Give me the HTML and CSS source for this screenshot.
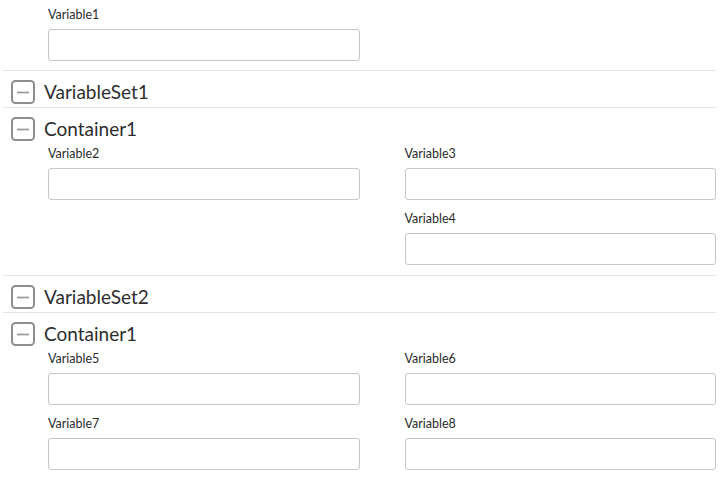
FILE: index.html
```html
<!DOCTYPE html>
<html lang="en">
<head>
    <meta charset="UTF-8">
    <title>Variables</title>
    <link rel="stylesheet" href="styles.css">
</head>
<body>

    <div class="form">

        <div class="fields top">
            <div class="field">
                <label>Variable1</label>
                <input type="text">
            </div>
        </div>

        <div class="set">
            <div class="heading">
                <span class="toggle"><svg width="24" height="24" viewBox="0 0 24 24"><rect x="1" y="1" width="22" height="22" rx="3.5"/><line x1="6" y1="12.5" x2="18" y2="12.5"/></svg></span>
                VariableSet1
            </div>
            <div class="heading container">
                <span class="toggle"><svg width="24" height="24" viewBox="0 0 24 24"><rect x="1" y="1" width="22" height="22" rx="3.5"/><line x1="6" y1="12.5" x2="18" y2="12.5"/></svg></span>
                Container1
            </div>
            <div class="fields">
                <div class="column">
                    <div class="field">
                        <label>Variable2</label>
                        <input type="text">
                    </div>
                </div>
                <div class="column">
                    <div class="field">
                        <label>Variable3</label>
                        <input type="text">
                    </div>
                    <div class="field">
                        <label>Variable4</label>
                        <input type="text">
                    </div>
                </div>
            </div>
        </div>

        <div class="set">
            <div class="heading">
                <span class="toggle"><svg width="24" height="24" viewBox="0 0 24 24"><rect x="1" y="1" width="22" height="22" rx="3.5"/><line x1="6" y1="12.5" x2="18" y2="12.5"/></svg></span>
                VariableSet2
            </div>
            <div class="heading container">
                <span class="toggle"><svg width="24" height="24" viewBox="0 0 24 24"><rect x="1" y="1" width="22" height="22" rx="3.5"/><line x1="6" y1="12.5" x2="18" y2="12.5"/></svg></span>
                Container1
            </div>
            <div class="fields">
                <div class="column">
                    <div class="field">
                        <label>Variable5</label>
                        <input type="text">
                    </div>
                    <div class="field">
                        <label>Variable7</label>
                        <input type="text">
                    </div>
                </div>
                <div class="column">
                    <div class="field">
                        <label>Variable6</label>
                        <input type="text">
                    </div>
                    <div class="field">
                        <label>Variable8</label>
                        <input type="text">
                    </div>
                </div>
            </div>
        </div>

    </div>

</body>
</html>
```

FILE: styles.css
```css
body {
    margin: 0;
    background-color: #fff;
    color: #333;
    font-family: 'Lato', 'Liberation Sans', sans-serif;
}

.form {
    margin-left: 3px;
    width: 713px;
}

.fields {
    display: grid;
    grid-template-columns: 1fr 1fr;
    padding: 5px 0 10px;
}

.fields.top {
    padding: 7px 0 9px;
}

.column {
    display: flex;
    flex-direction: column;
    gap: 11px;
}

.field {
    padding-left: 45px;
    display: flex;
    flex-direction: column;
}

    .field label {
        font-size: 12.5px;
        line-height: 16px;
        margin-bottom: 6px;
        color: #2b2b2b;
    }

    .field input {
        box-sizing: border-box;
        width: 100%;
        height: 32px;
        margin: 0;
        border: 1px solid #c6c6c6;
        border-radius: 3px;
        background: #fff;
        font-family: inherit;
        font-size: 14px;
        padding: 0 8px;
    }

.set {
    border-top: 1px solid #e4e4e4;
}

.heading {
    display: flex;
    align-items: center;
    gap: 9px;
    padding: 9px 0 3px 8px;
    font-size: 19px;
    line-height: 24px;
    color: #2e2e2e;
}

    .heading.container {
        border-top: 1px solid #e4e4e4;
        padding-bottom: 0;
    }

.toggle {
    display: flex;
    width: 24px;
    height: 24px;
}

    .toggle rect {
        fill: #fff;
        stroke: #8e8e8e;
        stroke-width: 2;
    }

    .toggle line {
        stroke: #999;
        stroke-width: 1.7;
    }
```
